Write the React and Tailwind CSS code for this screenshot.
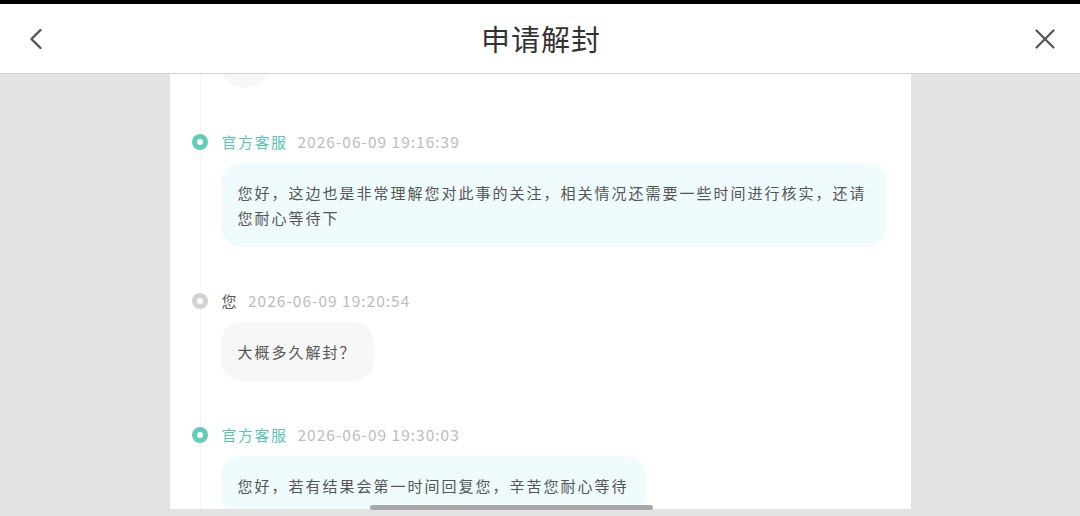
import { ChevronLeft, X } from "lucide-react";

const messages = [
  {
    from: "agent",
    name: "官方客服",
    time: "2026-06-09 19:16:39",
    text: "您好，这边也是非常理解您对此事的关注，相关情况还需要一些时间进行核实，还请您耐心等待下",
  },
  { from: "me", name: "您", time: "2026-06-09 19:20:54", text: "大概多久解封？" },
  {
    from: "agent",
    name: "官方客服",
    time: "2026-06-09 19:30:03",
    text: "您好，若有结果会第一时间回复您，辛苦您耐心等待",
  },
];

const Message = ({ from, name, time, text }) => {
  const isAgent = from === "agent";
  return (
    <div className="flex flex-col">
      {/* label row */}
      <div className="flex items-center h-5">
        <div className="w-[52px] shrink-0 flex justify-start pl-[22px]">
          <span
            className={`relative w-4 h-4 shrink-0 rounded-full flex items-center justify-center ${
              isAgent ? "bg-[#5fcdb7]" : "bg-[#d3d3d3]"
            }`}
          >
            <span className="w-[6px] h-[6px] shrink-0 rounded-full bg-white" />
          </span>
        </div>
        <span
          className={`text-[15px] tracking-[1.5px] ${
            isAgent ? "text-[#57c6b3]" : "text-[#555555]"
          }`}
        >
          {name}
        </span>
        <span className="text-[15.5px] tracking-[1px] text-[#bcbcbc] ml-[10px]">{time}</span>
      </div>

      {/* bubble */}
      <div className="relative pl-[51px] mt-[11px]">
        <div
          className={`w-fit max-w-[666px] rounded-[20px] px-[17px] py-[17px] text-[15px] leading-[25px] tracking-[2px] text-[#555555] ${
            isAgent ? "bg-[#effbfc]" : "bg-[#f7f7f7]"
          }`}
        >
          {text}
        </div>
      </div>
    </div>
  );
};

export default function App() {
  return (
    <div
      className="w-[1080px] h-[516px] overflow-hidden flex flex-col bg-[#e3e3e3]"
      style={{ fontFamily: '"Noto Sans CJK SC", "Noto Sans", sans-serif' }}
    >
      <div className="h-1 bg-black" />

      {/* header */}
      <div className="h-[70px] bg-white border-b border-[#d4d4d4] flex items-center justify-between px-[18px]">
        <ChevronLeft size={36} strokeWidth={1.6} className="text-[#555555]" />
        <h1 className="text-[29px] text-[#333333] tracking-[1px]">申请解封</h1>
        <X size={34} strokeWidth={1.6} className="text-[#555555]" />
      </div>

      {/* body */}
      <div className="relative flex-1">
        <div className="mx-auto w-[741px] h-[435px] bg-white overflow-hidden relative">
          {/* timeline */}
          <div className="absolute left-[30px] top-0 bottom-0 w-px bg-[#f4f4f4]" />

          {/* faded item above */}
          <div className="relative ml-[50px] -mt-[36px] w-[50px] h-[50px] rounded-full bg-[#f7f7f7]" />

          <div className="flex flex-col gap-[44px] mt-[44px]">
            {messages.map((m) => (
              <Message key={m.time} {...m} />
            ))}
          </div>
        </div>

        {/* scrollbar */}
        <div className="absolute left-[370px] top-[431px] w-[283px] h-[5px] rounded-full bg-[#a9a9a9]" />
      </div>
    </div>
  );
}
